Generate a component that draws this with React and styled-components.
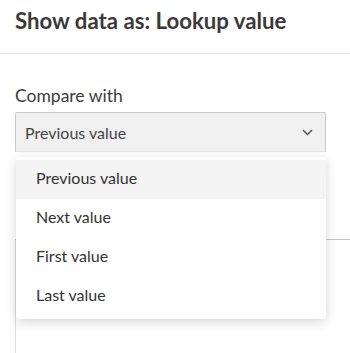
import React from 'react';
import styled, {createGlobalStyle} from 'styled-components';

const Global = createGlobalStyle`
  html, body {
    margin: 0;
    padding: 0;
    background: #fff;
    font-family: Lato, "Open Sans", sans-serif;
    overflow: hidden;
  }
`;

const options = ["Previous value", "Next value", "First value", "Last value"];

const Page = styled.div`
  width: 350px;
  height: 353px;
  overflow: hidden;
`;

const Header = styled.div`
  padding: 8px 15px 19px;
  border-bottom: 1px solid #e2e2e2;
  font-size: 22.2px;
  line-height: 26px;
  font-weight: 700;
  color: #3a3a3a;
`;

const Body = styled.div`
  padding: 0 24px 0 15px;
`;

const Label = styled.div`
  margin-top: 31px;
  font-size: 17.5px;
  line-height: 21px;
  color: #3d3d3d;
`;

const Field = styled.div`
  position: relative;
  margin-top: 6px;
`;

const Select = styled.div`
  box-sizing: border-box;
  height: 40px;
  display: flex;
  align-items: center;
  justify-content: space-between;
  padding: 0 12px 0 9px;
  background: #f0f0f0;
  border: 1px solid #c9c9c9;
  border-bottom-color: #e4e4e4;
  border-radius: 2px 2px 0 0;
  font-size: 16px;
  color: #444;
`;

const Menu = styled.ul`
  position: absolute;
  top: 45px;
  left: 1px;
  right: 0;
  margin: 0;
  padding: 3px 0;
  list-style: none;
  background: #fff;
  border-radius: 3px;
  box-shadow: 0 3px 12px rgba(0, 0, 0, 0.16);
  z-index: 2;
`;

const Item = styled.li`
  box-sizing: border-box;
  height: 39px;
  display: flex;
  align-items: center;
  padding: 0 0 5px 20px;
  font-size: 16px;
  color: #333;
  background: ${p => (p.$active ? '#f4f4f4' : '#fff')};
`;

const Panel = styled.div`
  margin: 87px -24px 0 0;
  height: 140px;
  border-top: 1px solid #c4c4c4;
  border-left: 1px solid #dcdcdc;
`;

const Chevron = () => (
  <svg width="11" height="7" viewBox="0 0 11 7">
    <path d="M1 1l4.5 4.5L10 1" fill="none" stroke="#555" strokeWidth="1.5" />
  </svg>
);

export default function App() {
  return (
    <Page>
      <Global/>
      <Header>Show data as: Lookup value</Header>
      <Body>
        <Label>Compare with</Label>
        <Field>
          <Select>
            <span>Previous value</span>
            <Chevron/>
          </Select>
          <Menu>
            {options.map((o, i) => <Item key={o} $active={i === 0}>{o}</Item>)}
          </Menu>
        </Field>
        <Panel/>
      </Body>
    </Page>
  );
}
